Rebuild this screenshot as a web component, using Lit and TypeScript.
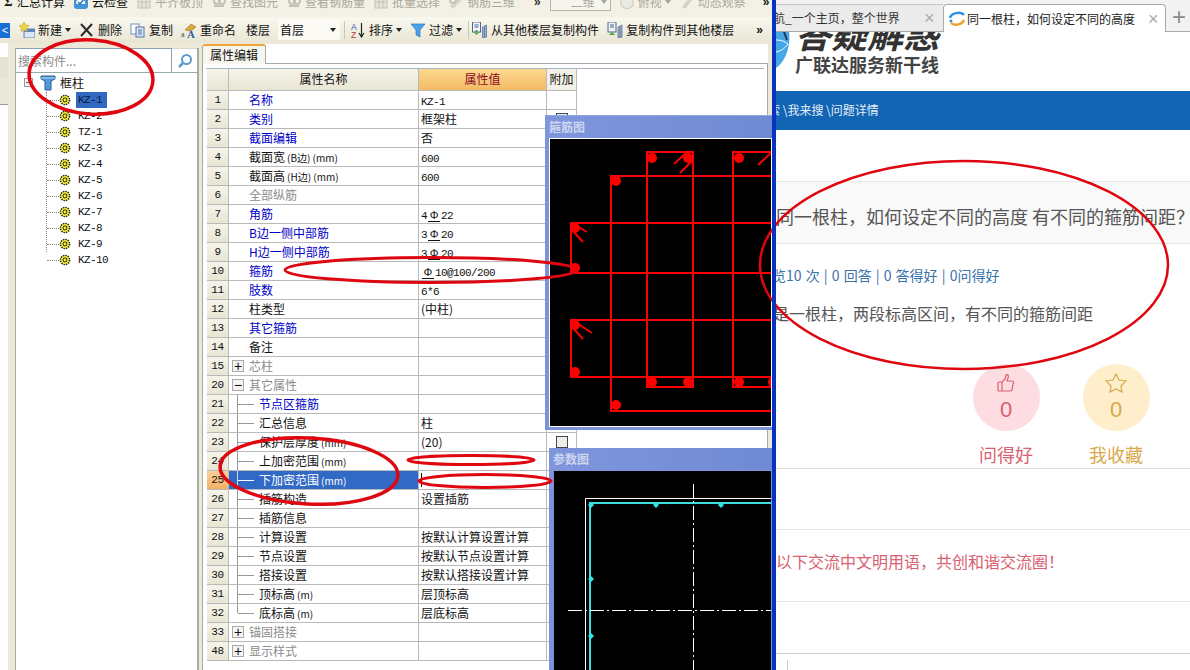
import { LitElement, css, html, svg } from "lit"
import { customElement } from "lit/decorators.js"

type Row = {
  n: number
  name: string
  unit?: string
  value?: string
  grade?: [string, string]
  kind?: "link" | "group"
  box?: "+" | "-"
  child?: boolean
  last?: boolean
  check?: boolean
  selected?: boolean
}

const rows: Row[] = [
  { n: 1, name: "名称", value: "KZ-1", kind: "link" },
  { n: 2, name: "类别", value: "框架柱", kind: "link", check: true },
  { n: 3, name: "截面编辑", value: "否", kind: "link" },
  { n: 4, name: "截面宽", unit: "(B边) (mm)", value: "600" },
  { n: 5, name: "截面高", unit: "(H边) (mm)", value: "600" },
  { n: 6, name: "全部纵筋", kind: "group" },
  { n: 7, name: "角筋", grade: ["4", "22"], kind: "link" },
  { n: 8, name: "B边一侧中部筋", grade: ["3", "20"], kind: "link" },
  { n: 9, name: "H边一侧中部筋", grade: ["3", "20"], kind: "link" },
  { n: 10, name: "箍筋", grade: ["", "10@100/200"], kind: "link" },
  { n: 11, name: "肢数", value: "6*6", kind: "link" },
  { n: 12, name: "柱类型", value: "(中柱)" },
  { n: 13, name: "其它箍筋", kind: "link" },
  { n: 14, name: "备注" },
  { n: 15, name: "芯柱", kind: "group", box: "+" },
  { n: 20, name: "其它属性", kind: "group", box: "-" },
  { n: 21, name: "节点区箍筋", kind: "link", child: true },
  { n: 22, name: "汇总信息", value: "柱", child: true },
  { n: 23, name: "保护层厚度", unit: "(mm)", value: "(20)", child: true, check: true },
  { n: 24, name: "上加密范围", unit: "(mm)", child: true },
  { n: 25, name: "下加密范围", unit: "(mm)", child: true, selected: true },
  { n: 26, name: "插筋构造", value: "设置插筋", child: true },
  { n: 27, name: "插筋信息", child: true },
  { n: 28, name: "计算设置", value: "按默认计算设置计算", child: true },
  { n: 29, name: "节点设置", value: "按默认节点设置计算", child: true },
  { n: 30, name: "搭接设置", value: "按默认搭接设置计算", child: true },
  { n: 31, name: "顶标高", unit: "(m)", value: "层顶标高", child: true },
  { n: 32, name: "底标高", unit: "(m)", value: "层底标高", child: true, last: true },
  { n: 33, name: "锚固搭接", kind: "group", box: "+" },
  { n: 48, name: "显示样式", kind: "group", box: "+" },
]

const treeItems = ["KZ-1", "KZ-2", "TZ-1", "KZ-3", "KZ-4", "KZ-5", "KZ-6", "KZ-7", "KZ-8", "KZ-9", "KZ-10"]

const ico = (body: unknown, w = 16, h = 16) =>
  html`<svg class="ico" width=${w} height=${h} viewBox="0 0 16 16">${body}</svg>`

const icons: Record<string, unknown> = {
  cloud: ico(svg`<rect x="1" y="1" width="14" height="14" rx="3" fill="#3f93d6"/><path d="M3 9c0-3 3-4 5-3 2-1 5 1 4 4H4z" fill="#fff"/><path d="M5 8l2 2 4-5" stroke="#2a70b0" stroke-width="1.5" fill="none"/>`),
  grid: ico(svg`<rect x="2" y="3" width="12" height="11" fill="#e6e4d8" stroke="#c4c2b4"/><path d="M6 3v11M10 3v11M2 8h12" stroke="#c4c2b4"/>`),
  search: ico(svg`<circle cx="6" cy="7" r="3" fill="none" stroke="#c4c2b4" stroke-width="2"/><circle cx="11" cy="7" r="3" fill="none" stroke="#c4c2b4" stroke-width="2"/><path d="M3 12h10" stroke="#c4c2b4" stroke-width="2"/>`),
  rebar: ico(svg`<path d="M2 12l9-9 3 3-9 9z" fill="#d8d6ca"/><circle cx="5" cy="6" r="3" fill="none" stroke="#c4c2b4" stroke-width="2"/>`),
  cube: ico(svg`<path d="M2 5l5-3 7 2v8l-6 3-6-3z" fill="#eceae0" stroke="#c8c6b8"/>`),
  orbit: ico(svg`<path d="M3 13l8-10 3 2-8 10z" fill="#d4d2c6"/>`),
  create: ico(svg`<rect x="5" y="7" width="11" height="9" fill="#dbe7f5" stroke="#5b84bc"/><rect x="5" y="7" width="11" height="3" fill="#5b84bc"/><path d="M5 0l1.5 3 3.5.5-2.5 2.5.5 3.5-3-1.6-3 1.6.5-3.5L0 3.5 3.5 3z" fill="#f4d53e" stroke="#b89a20" stroke-width=".5"/>`),
  del: ico(svg`<path d="M2 2l11 12M13 2L2 14" stroke="#2b2b2b" stroke-width="2"/>`),
  copy: ico(svg`<rect x="1" y="2" width="8" height="10" fill="#fff" stroke="#6f8fb8"/><rect x="6" y="5" width="8" height="10" fill="#dbe7f5" stroke="#4f74a8"/><path d="M8 8h4M8 10h4M8 12h4" stroke="#4f74a8"/>`),
  rename: ico(svg`<path d="M4 8l6-6 5 3-5 4z" fill="#d9a93c" stroke="#8a6a20" stroke-width=".5"/><text x="0" y="15" font-size="8" fill="#444" font-family="Liberation Serif">a</text><text x="6" y="16" font-size="11" font-weight="700" fill="#2f5fa8" font-family="Liberation Serif">A</text>`),
  sort: ico(svg`<text x="1" y="7.5" font-size="8.5" fill="#2f5fa8" font-family="Liberation Sans">A</text><text x="1" y="15.5" font-size="8.5" fill="#b83a3a" font-family="Liberation Sans">Z</text><path d="M11.5 1v13M9 11l2.5 4 2.5-4" stroke="#222" fill="none" stroke-width="1.2"/>`),
  filter: ico(svg`<path d="M1 2h14L10 8v7l-4-2V8z" fill="#4aa3e6" stroke="#2a78b8" stroke-width=".7"/>`),
  fromFloor: ico(svg`<rect x="1" y="0" width="8" height="10" fill="#f2f2f2" stroke="#50668c"/><path d="M3 3h4M3 5h4" stroke="#3a67a8"/><path d="M2 10l3 3 3-3z M4 8h2v3H4z" fill="#3faa3a"/><path d="M11 5l4-2v12l-4 1zM13 5v10" fill="#9cb4cf" stroke="#50668c" stroke-width=".7"/>`, 17),
  toFloor: ico(svg`<rect x="1" y="0" width="8" height="10" fill="#f2f2f2" stroke="#50668c"/><path d="M3 3h4M3 5h4" stroke="#3a67a8"/><path d="M2 13l3-3 3 3z" fill="#3faa3a"/><path d="M11 5l4-2v12l-4 1zM13 5v10" fill="#9cb4cf" stroke="#50668c" stroke-width=".7"/>`),
  gear: ico(svg`<circle cx="8" cy="8" r="6.2" fill="#f2ee2a" stroke="#222" stroke-width="1.8" stroke-dasharray="2 1.2"/><circle cx="8" cy="8" r="2.6" fill="#f2ee2a" stroke="#333" stroke-width="1.4"/>`, 12, 12),
}

const dots = [[652, 158], [688, 158], [739, 158], [616, 181], [575, 228], [575, 268], [575, 325], [575, 372], [652, 382], [688, 382], [739, 382], [773, 382], [616, 405]]
const hooks = [[674, 164, 688, 151], [680, 173, 693, 160], [758, 165, 771, 153], [572, 223, 587, 232], [572, 230, 583, 242], [572, 320, 592, 333], [572, 327, 583, 339]]
const paramDots = [[591, 504], [656, 504], [721, 504], [591, 578], [591, 635]]

@customElement("app-root")
export class AppRoot extends LitElement {
  tool(icon: string, label: string, drop = false, off = false) {
    return html`<span class="tool ${off ? "off" : ""}">${icons[icon]}<span>${label}</span>${drop ? html`<i class="caret"></i>` : ""}</span>`
  }

  renderRow(r: Row) {
    return html`
      <div class="row ${r.selected ? "selected" : ""}">
        <div class="num">${r.n}</div>
        <div class="name ${r.kind ?? ""}">
          <span class="lead ${r.child ? "branch" : ""} ${r.last ? "last" : ""}">
            ${r.box ? html`<span class="box">${r.box === "+" ? "+" : "−"}</span>` : ""}
          </span>
          <span>${r.name}</span>${r.unit ? html`<span class="unit">${r.unit}</span>` : ""}
        </div>
        <div class="val">
          ${r.selected ? html`<i class="cursor"></i>` : ""}
          ${r.grade ? html`<span class="mono">${r.grade[0]}</span><span class="grade">Φ</span><span class="mono">${r.grade[1]}</span>` : ""}
          ${r.value && /^[-\w*]+$/.test(r.value) ? html`<span class="mono">${r.value}</span>` : r.value}
        </div>
        <div class="add">${r.check ? html`<i class="check"></i>` : ""}</div>
      </div>
    `
  }

  renderLeft() {
    return html`
      <section class="app">
        <div class="bar1">
          <div class="bar1-in">
            <span class="tool"><b class="sigma">Σ</b><span>汇总计算</span></span>
            ${this.tool("cloud", "云检查")}
            ${this.tool("grid", "平齐板顶", false, true)}
            ${this.tool("search", "查找图元", false, true)}
            ${this.tool("search", "查看钢筋量", false, true)}
            ${this.tool("grid", "批量选择", false, true)}
            ${this.tool("rebar", "钢筋三维", false, true)}
            <span class="more first">»</span>
            <span class="viewsel">二维<i class="caret"></i></span>
            ${this.tool("cube", "俯视", true, true)}
            ${this.tool("orbit", "动态观察", false, true)}
            <span class="more">»</span>
          </div>
        </div>
        <div class="bar2">
          <span class="collapse">&lt;</span>
          ${this.tool("create", "新建", true)}
          ${this.tool("del", "删除")}
          ${this.tool("copy", "复制")}
          ${this.tool("rename", "重命名")}
          <span class="floor"><span>楼层</span><span class="floorsel">首层<i class="caret"></i></span></span>
          <i class="sep a"></i>
          ${this.tool("sort", "排序", true)}
          ${this.tool("filter", "过滤", true)}
          <i class="sep b"></i>
          ${this.tool("fromFloor", "从其他楼层复制构件")}
          ${this.tool("toFloor", "复制构件到其他楼层")}
          <span class="more end">»</span>
        </div>
        <div class="work">
          <div class="strip"><div class="strip-a"></div><div class="strip-b"></div></div>
          <div class="tree">
            <div class="searchbox">
              <span class="ph">搜索构件...</span>
              <span class="lens">
                <svg width="16" height="16" viewBox="0 0 16 16"><circle cx="9.5" cy="6.5" r="4.5" fill="none" stroke="#5c9ccc" stroke-width="2"/><path d="M6 10l-4 4" stroke="#5c9ccc" stroke-width="2.5"/></svg>
              </span>
            </div>
            <div class="tree-root">
              <span class="minus"></span>
              <svg width="16" height="16" viewBox="0 0 16 16"><path d="M1 1h14v3l-4 2v9H5V6L1 4z" fill="#4e97d8" stroke="#2a5f98"/><path d="M1 3h14" stroke="#b8dcf6"/></svg>
              <span>框柱</span>
            </div>
            <div class="tree-list">
              ${treeItems.map(
                (t, i) => html`<div class="leaf"><i class="tick"></i>${icons.gear}<span class="leaf-t ${i === 0 ? "on" : ""}">${t}</span></div>`
              )}
            </div>
          </div>
          <div class="props">
            <div class="tabs"><span class="tab">属性编辑</span></div>
            <div class="grid">
              <div class="row head">
                <div class="num"></div>
                <div class="hname">属性名称</div>
                <div class="hval">属性值</div>
                <div class="hadd">附加</div>
              </div>
              ${rows.map((r) => this.renderRow(r))}
            </div>
          </div>
        </div>
        <div class="dialog stirrup">
          <div class="dlg-title">箍筋图</div>
          <svg class="cad" width="221" height="287" viewBox="550 139 221 287">
            <g fill="none" stroke="#f00" stroke-width="2">
              <rect x="647" y="152" width="46" height="235"/>
              <rect x="733" y="152" width="46" height="235"/>
              <rect x="611" y="176" width="200" height="235"/>
              <rect x="571" y="223" width="260" height="50"/>
              <rect x="571" y="320" width="260" height="57"/>
              ${hooks.map(([a, b, c, d]) => svg`<line x1=${a} y1=${b} x2=${c} y2=${d}/>`)}
            </g>
            ${dots.map(([x, y]) => svg`<circle cx=${x} cy=${y} r="5" fill="#f00"/>`)}
          </svg>
        </div>
        <div class="dialog param">
          <div class="dlg-title">参数图</div>
          <svg class="cad" width="217" height="200" viewBox="554 470 217 200">
            <path d="M771 497.5H585.5V670" fill="none" stroke="#fff" stroke-width="1"/>
            <path d="M771 502H590V670" fill="none" stroke="#3fdcdc" stroke-width="2"/>
            ${paramDots.map(([x, y]) => svg`<path d=${`M${x - 3} ${y}l3-3 3 3-3 3z`} fill="#2ee6e6"/>`)}
            <g stroke="#fff" stroke-dasharray="14 3 2 3">
              <line x1="693.5" y1="483" x2="693.5" y2="670"/>
              <line x1="568" y1="609.5" x2="771" y2="609.5"/>
            </g>
          </svg>
        </div>
      </section>
    `
  }

  renderRight() {
    return html`
      <section class="web">
        <div class="btabs">
          <div class="btab one"><span class="clip-t">航_一个主页，整个世界</span><span class="x">×</span></div>
          <div class="btab two">
            <svg width="18" height="16" viewBox="0 0 18 16"><path d="M2 7c1-5 11-7 14-3" fill="none" stroke="#2f8fdc" stroke-width="2.4"/><path d="M16 9c-2 5-10 6-13 3" fill="none" stroke="#f0a030" stroke-width="2.4"/><circle cx="3" cy="10" r="1.5" fill="#2f8fdc"/></svg>
            <span class="t2">同一根柱，如何设定不同的高度</span><span class="x">×</span>
          </div>
          <span class="plus">+</span>
        </div>
        <div class="logo">
          <svg class="globe" width="14" height="36" viewBox="0 0 14 36"><path d="M0 0h13c2 12-3 30-13 36z" fill="#45a6e8"/><path d="M0 8c6 0 10 2 12 4M0 20c5-1 8-3 12-8" stroke="#fff" fill="none"/><path d="M8 0l3 8" stroke="#234" stroke-width="2"/></svg>
          <div class="logo-text">
            <div class="big">答疑解惑</div>
            <div class="sub">广联达服务新干线</div>
          </div>
        </div>
        <div class="crumb"><span>搜索 \\我来搜 \\问题详情</span></div>
        <div class="qtitle"><span>同一根柱，如何设定不同的高度 有不同的箍筋间距？</span></div>
        <div class="qmeta"><span>浏览10 次 | 0 回答 | 0 答得好 | 0问得好</span></div>
        <div class="qbody"><span>同是一根柱，两段标高区间，有不同的箍筋间距</span></div>
        <div class="acts">
          <div class="act good">
            <div class="disc">
              <svg width="20" height="20" viewBox="0 0 20 20" fill="none" stroke="currentColor" stroke-width="1.2"><rect x="2" y="9" width="4" height="9" rx="1"/><path d="M6 9l3-3 1-4c2-1 3 1 2 3l-1 3h5c2 0 2 2 1 3l-1 6c-.5 1-1 1-2 1H6"/></svg>
              <span>0</span>
            </div>
            <div class="act-l">问得好</div>
          </div>
          <div class="act fav">
            <div class="disc">
              <svg width="22" height="20" viewBox="0 0 22 20" fill="none" stroke="currentColor" stroke-width="1.2"><path d="M11 1l3 6 7 1-5 5 1 6-6-3-6 3 1-6-5-5 7-1z"/></svg>
              <span>0</span>
            </div>
            <div class="act-l">我收藏</div>
          </div>
        </div>
        <div class="gap1"></div>
        <div class="notice"><span>请以下交流中文明用语，共创和谐交流圈！</span></div>
        <div class="gap2"></div>
        <div class="editor"><i></i></div>
      </section>
    `
  }

  render() {
    return html`
      ${this.renderLeft()}
      <div class="divider"></div>
      ${this.renderRight()}
      <svg class="marks" width="1190" height="670" viewBox="0 0 1190 670" fill="none" stroke="#e0060f">
        <ellipse cx="91" cy="77" rx="62" ry="37" transform="rotate(4 91 77)" stroke-width="3.5"/>
        <ellipse cx="431" cy="270" rx="146" ry="12.5" stroke-width="3"/>
        <ellipse cx="309" cy="471" rx="89" ry="33" transform="rotate(3 309 471)" stroke-width="3.5"/>
        <ellipse cx="471" cy="460" rx="63" ry="4.5" stroke-width="3"/>
        <ellipse cx="485" cy="481" rx="66" ry="6.5" stroke-width="3"/>
        <ellipse cx="964" cy="265" rx="204" ry="104" stroke-width="2.5"/>
      </svg>
    `
  }

  static styles = css`
    :host {
      display: flex;
      position: relative;
      width: 1190px;
      height: 670px;
      overflow: hidden;
      background: #fff;
      font: 12px/16px "Noto Sans CJK SC", "Liberation Sans", sans-serif;
      color: #111;
    }
    * {
      box-sizing: border-box;
    }
    .ico {
      flex: none;
      display: block;
    }
    .marks {
      position: absolute;
      left: 0;
      top: 0;
      z-index: 5;
      pointer-events: none;
    }
    .divider {
      flex: none;
      width: 4px;
      background: #0a32c0;
      position: relative;
      z-index: 6;
    }

    /* left: desktop program */
    .app {
      flex: none;
      width: 772px;
      height: 670px;
      position: relative;
      display: flex;
      flex-direction: column;
      background: #ece9d8;
      overflow: hidden;
    }
    .bar1 {
      height: 17px;
      overflow: hidden;
      background: #f3f1e6;
    }
    .bar1-in {
      display: flex;
      align-items: center;
      gap: 8px;
      height: 16px;
      padding-left: 4px;
      margin-top: -6px;
    }
    .sigma {
      font: 700 13px "Liberation Serif", serif;
      width: 10px;
    }
    .tool {
      display: flex;
      align-items: center;
      gap: 3px;
      flex: none;
      white-space: nowrap;
    }
    .tool.off {
      color: #a9a79c;
    }
    .caret {
      display: inline-block;
      width: 0;
      height: 0;
      border: 3px solid transparent;
      border-top: 4px solid #222;
      border-bottom: 0;
    }
    .off .caret {
      border-top-color: #a9a79c;
    }
    .more {
      font: 700 12px "Liberation Sans", sans-serif;
      flex: none;
    }
    .more.first {
      margin-left: 11px;
      color: #333;
    }
    .more.end {
      margin-left: 14px;
    }
    .bar1-in .more:last-child {
      margin-left: 9px;
    }
    .viewsel {
      flex: none;
      display: flex;
      align-items: center;
      justify-content: space-between;
      width: 61px;
      height: 18px;
      margin-left: 1px;
      padding: 0 3px 0 20px;
      border: 1px solid #b8b6a8;
      background: #f6f5ee;
      color: #a9a79c;
    }
    .viewsel .caret {
      border-top-color: #a9a79c;
    }
    .bar2 {
      display: flex;
      align-items: center;
      gap: 8px;
      height: 26px;
      background: linear-gradient(#f9f8ef, #e9e6d4);
      position: relative;
      flex: none;
    }
    .collapse {
      flex: none;
      width: 10px;
      height: 15px;
      margin-right: 1px;
      background: #1a6fd6;
      color: #fff;
      font: 11px/15px "Liberation Sans", sans-serif;
      text-align: center;
    }
    .floor {
      flex: none;
      display: flex;
      align-items: center;
      gap: 8px;
      margin-left: 2px;
    }
    .floorsel {
      display: flex;
      align-items: center;
      justify-content: space-between;
      width: 62px;
      height: 20px;
      padding: 0 4px 0 2px;
      background: #fbfaf4;
    }
    .sep {
      flex: none;
      width: 1px;
      height: 18px;
      background: #c9c6b4;
    }
    .sep.a {
      margin: 0 -3px 0 -4px;
    }
    .sep.b {
      margin: 0 -6px 0 -2px;
    }
    .work {
      flex: 1;
      min-height: 0;
      display: flex;
    }
    .strip {
      flex: none;
      width: 8px;
      margin-right: 7px;
      display: flex;
      flex-direction: column;
      background: #fff;
    }
    .strip-a {
      height: 21px;
      margin-top: 14px;
      background: #e6e3d2;
    }
    .strip-b {
      height: 27px;
      background: #ece9d8;
      border-bottom: 1px solid #999;
    }
    .tree {
      flex: none;
      width: 184px;
      display: flex;
      flex-direction: column;
      background: #fff;
      border-right: 2px solid #a8aaa4;
      border-left: 1px solid #a8aaa4;
      margin-top: 5px;
    }
    .searchbox {
      flex: none;
      display: flex;
      height: 25px;
      border-bottom: 1px solid #9aa;
      background: #fff;
    }
    .ph {
      flex: 1;
      padding-left: 2px;
      color: #8a8a8a;
      font-size: 12px;
      line-height: 24px;
      border: 1px solid #8ea0b4;
      border-width: 1px 1px 0 0;
    }
    .lens {
      flex: none;
      width: 25px;
      display: flex;
      align-items: center;
      justify-content: center;
      border-top: 1px solid #d8d6c8;
    }
    .tree-root {
      display: flex;
      align-items: center;
      gap: 4px;
      height: 19px;
      padding-left: 23px;
    }
    .minus {
      width: 9px;
      height: 9px;
      margin-left: -15px;
      margin-right: 3px;
      border: 1px solid #999;
      background: linear-gradient(#666, #666) center/5px 1px no-repeat #f4f4f4;
    }
    .tree-list {
      margin-left: 30px;
      border-left: 1px dotted #888;
      height: 160px;
    }
    .leaf {
      display: flex;
      align-items: center;
      height: 16px;
    }
    .tick {
      flex: none;
      width: 12px;
      border-top: 1px dotted #888;
    }
    .leaf-t {
      font: 11px/16px "Liberation Mono", monospace;
      letter-spacing: -0.6px;
      margin-left: 5px;
      padding: 0 5px 0 2px;
    }
    .leaf-t.on {
      background: #3269c0;
      color: #0a1a40;
    }

    .props {
      flex: none;
      width: 566px;
      margin-left: 3px;
      display: flex;
      flex-direction: column;
      min-width: 0;
    }
    .tabs {
      flex: none;
      height: 20px;
      margin-top: 1px;
      background: #fff;
      border-bottom: 1px solid #a8aaa4;
      display: flex;
    }
    .tab {
      width: 64px;
      height: 20px;
      text-align: center;
      line-height: 18px;
      background: #f8f7ef;
      border: 1px solid #a8aaa4;
      border-top: 2px solid #efa43c;
      border-bottom: 0;
      border-radius: 3px 3px 0 0;
    }
    .grid {
      flex: 1;
      display: flex;
      flex-direction: column;
      padding: 4px 3px 0 4px;
      margin: 0;
      background: #fff;
      position: relative;
      border-left: 1px solid #a8aaa4;
      border-right: 1px solid #a8aaa4;
    }
    .grid::before {
      content: "";
      display: block;
      height: 1px;
      margin-left: -1px;
      background: #a8b4c0;
    }
    .row {
      display: grid;
      grid-template-columns: 22px 190px 128px 30px;
      height: 19px;
      line-height: 18px;
      flex: none;
    }
    .row > div {
      border-right: 1px solid #b9b9b9;
      border-bottom: 1px solid #b9b9b9;
      white-space: nowrap;
      overflow: hidden;
    }
    .row.head {
      height: 22px;
      line-height: 19px;
      text-align: center;
    }
    .head .num,
    .num {
      background: linear-gradient(#f6f4ea, #e8e5d4);
      text-align: center;
      font: 11px/18px "Liberation Mono", monospace;
      letter-spacing: -0.4px;
    }
    .hname {
      background: linear-gradient(#f6f4ea, #e8e5d4);
    }
    .hval {
      background: linear-gradient(#fbd98f, #f4b964);
      color: #8a0a2a;
    }
    .hadd {
      background: #f4f2e8;
    }
    .name {
      display: flex;
      align-items: center;
    }
    .name.link {
      color: #0000c8;
    }
    .name.group {
      color: #8c8c8c;
    }
    .lead {
      flex: none;
      width: 20px;
      height: 100%;
      display: flex;
      align-items: center;
    }
    .lead.branch {
      width: 30px;
      background:
        linear-gradient(#999, #999) 8px 0 / 1px 100% no-repeat,
        linear-gradient(#999, #999) 9px 50% / 16px 1px no-repeat;
    }
    .lead.branch.last {
      background:
        linear-gradient(#999, #999) 8px 0 / 1px 50% no-repeat,
        linear-gradient(#999, #999) 9px 50% / 16px 1px no-repeat;
    }
    .box {
      width: 12px;
      height: 12px;
      margin-left: 3px;
      border: 1px solid #aaa;
      background: #f4f4f0;
      color: #111;
      font: 14px/10px "Liberation Sans", sans-serif;
      text-align: center;
    }
    .unit {
      margin-left: 2px;
      font: 10px "Noto Sans CJK SC", sans-serif;
    }
    .val {
      padding-left: 2px;
      position: relative;
    }
    .mono {
      font: 11px/18px "Liberation Mono", monospace;
      letter-spacing: -0.6px;
    }
    .grade {
      display: inline-block;
      width: 12px;
      margin: 0 1px;
      text-align: center;
      font: 11px/11px "Liberation Sans", sans-serif;
      border-bottom: 1px solid #111;
    }
    .cursor {
      position: absolute;
      left: 2px;
      top: 2px;
      width: 1px;
      height: 14px;
      background: #111;
    }
    .add {
      display: flex;
      justify-content: center;
      padding-top: 3px;
    }
    .check {
      width: 12px;
      height: 12px;
      border: 1px solid #3a4a5a;
      background: #f0eee4;
    }
    .row.selected .num {
      background: linear-gradient(#fbd09a, #f4b064);
    }
    .row.selected .name {
      background: #316ac5;
      color: #fff;
    }
    .row.selected .lead.branch {
      background:
        linear-gradient(#cdd, #cdd) 8px 0 / 1px 100% no-repeat,
        linear-gradient(#fff, #fff) 9px 50% / 16px 1px no-repeat;
    }

    .dialog {
      position: absolute;
      background: #7c92da;
    }
    .dlg-title {
      height: 22px;
      margin-left: -5px;
      padding-left: 4px;
      font: 700 12px/22px "Noto Sans CJK SC", sans-serif;
      color: #cdd6f0;
      background: linear-gradient(90deg, #7f96dc, #6f8ad4);
    }
    .stirrup {
      left: 545px;
      top: 116px;
      width: 227px;
      height: 314px;
      padding-left: 5px;
      box-shadow: 0 -1px 0 #8fa4e0;
    }
    .param {
      left: 549px;
      top: 448px;
      width: 223px;
      height: 222px;
      padding-left: 5px;
    }
    .cad {
      display: block;
      background: #000;
      margin-top: 1px;
    }
    .stirrup .cad {
      outline: 1px solid #fff;
    }

    /* right: browser */
    .web {
      flex: none;
      width: 414px;
      height: 670px;
      display: flex;
      flex-direction: column;
      color: #555;
      overflow: hidden;
    }
    .btabs {
      flex: none;
      height: 32px;
      display: flex;
      align-items: flex-end;
      background: #f2f2f2;
      border-bottom: 1px solid #aaa;
    }
    .btab {
      height: 27px;
      display: flex;
      align-items: center;
      color: #333;
      white-space: nowrap;
    }
    .btab.one {
      width: 167px;
      background: #ebebeb;
      border-top: 1px solid #c4c4c4;
      overflow: hidden;
    }
    .clip-t {
      margin-left: -3px;
      width: 153px;
      overflow: hidden;
      flex: none;
    }
    .x {
      font: 18px/16px "Liberation Sans", sans-serif;
      color: #a8a8a8;
      flex: none;
    }
    .one .x {
      margin-left: -2px;
    }
    .btab.two {
      width: 223px;
      height: 28px;
      margin-bottom: -1px;
      padding-left: 4px;
      background: #fff;
      border: 1px solid #aaa;
      border-bottom: 0;
      border-radius: 4px 4px 0 0;
      color: #222;
    }
    .t2 {
      margin-left: 1px;
      width: 181px;
    }
    .plus {
      font: 24px/26px "Liberation Sans", sans-serif;
      color: #8a8a8a;
      margin-left: 6px;
      height: 27px;
    }
    .logo {
      flex: none;
      height: 59px;
      display: flex;
      overflow: hidden;
      position: relative;
    }
    .globe {
      flex: none;
      margin-right: 5px;
    }
    .logo-text {
      flex: none;
      margin-top: -19px;
    }
    .big {
      font: italic 700 36px/38px "Noto Sans CJK SC", sans-serif;
      color: #333;
      width: 145px;
      white-space: nowrap;
      letter-spacing: 0;
    }
    .sub {
      margin-top: 1px;
      font: 700 18px/24px "Noto Sans CJK SC", sans-serif;
      color: #444;
      white-space: nowrap;
    }
    .crumb {
      flex: none;
      height: 39px;
      background: #1265b4;
      color: #e8f0f8;
      font-size: 12px;
      line-height: 38px;
      white-space: nowrap;
      overflow: hidden;
      margin-bottom: 51px;
    }
    .crumb span {
      margin-left: -20px;
    }
    .qtitle {
      flex: none;
      height: 63px;
      background: #f9f9f9;
      border-top: 1px solid #e6e6e6;
      border-bottom: 1px solid #e6e6e6;
      font-size: 18px;
      line-height: 68px;
      white-space: nowrap;
      overflow: hidden;
    }
    .qmeta {
      flex: none;
      height: 20px;
      margin-top: 21px;
      font-size: 14px;
      line-height: 20px;
      word-spacing: 1px;
      color: #3a72aa;
      white-space: nowrap;
      overflow: hidden;
    }
    .qmeta span {
      margin-left: -18px;
    }
    .qbody {
      flex: none;
      height: 22px;
      margin-top: 17px;
      font-size: 16px;
      line-height: 22px;
      color: #555;
      white-space: nowrap;
      overflow: hidden;
    }
    .qbody span {
      margin-left: -19px;
    }
    .acts {
      flex: none;
      display: flex;
      height: 105px;
      margin-top: 40px;
      padding-left: 175px;
      border-bottom: 1px solid #ddd;
    }
    .act {
      flex: none;
      width: 110px;
      display: flex;
      flex-direction: column;
      align-items: center;
    }
    .disc {
      width: 67px;
      height: 67px;
      border-radius: 50%;
      display: flex;
      flex-direction: column;
      align-items: center;
      padding-top: 9px;
      font: 22px/26px "Liberation Sans", sans-serif;
    }
    .disc svg {
      margin-bottom: 4px;
    }
    .good {
      color: #d9606f;
    }
    .good .disc {
      background: #fddde1;
    }
    .fav {
      color: #d8a94a;
    }
    .fav .disc {
      background: #feeecb;
    }
    .act-l {
      margin-top: 10px;
      font-size: 18px;
      line-height: 26px;
    }
    .gap1 {
      flex: none;
      height: 61px;
      border-bottom: 1px solid #e6e6e6;
    }
    .notice {
      flex: none;
      height: 72px;
      border-bottom: 1px solid #e6e6e6;
      color: #d9606f;
      font-size: 16px;
      line-height: 62px;
      white-space: nowrap;
      overflow: hidden;
    }
    .notice span {
      margin-left: -16px;
    }
    .gap2 {
      flex: none;
      height: 52px;
      border-bottom: 1px solid #ccc;
    }
    .editor {
      flex: 1;
      padding: 6px 0 0 11px;
    }
    .editor i {
      display: block;
      width: 1px;
      height: 12px;
      background: #ccc;
    }
  `
}

declare global {
  interface HTMLElementTagNameMap {
    "app-root": AppRoot
  }
}
